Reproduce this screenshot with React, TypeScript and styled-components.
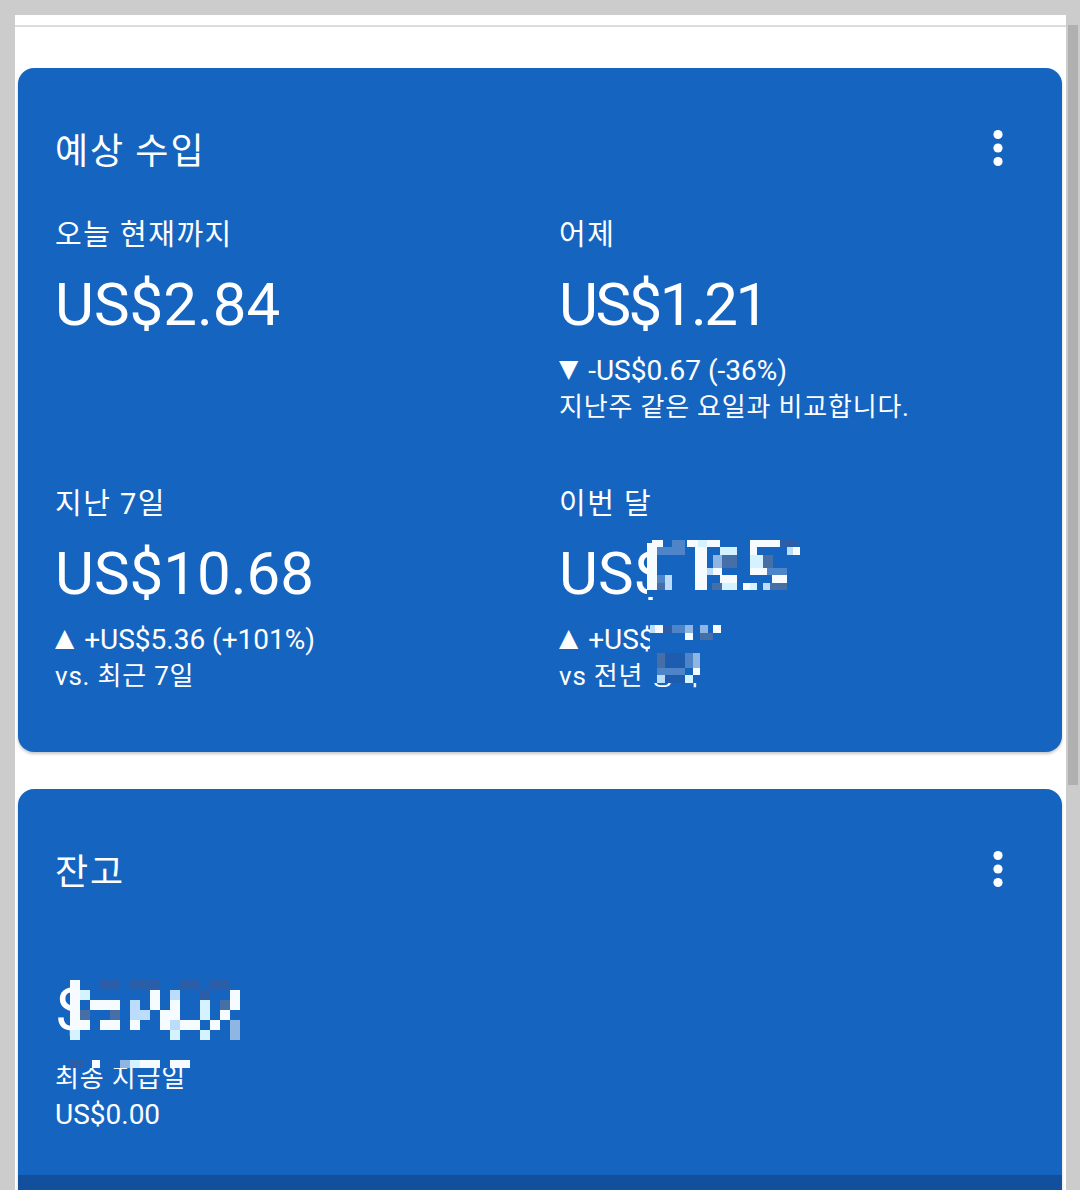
import React from "react";
import styled, { createGlobalStyle } from "styled-components";

const GlobalStyle = createGlobalStyle`
  html, body { margin: 0; padding: 0; background: #cccccc; }
  body {
    font-family: Roboto, "Noto Sans CJK KR", sans-serif;
    -webkit-font-smoothing: antialiased;
  }
  * { box-sizing: border-box; }
`;

const CARD_BLUE = "#1565c0";

const Viewport = styled.div`
  height: 1190px;
  overflow: hidden;
  background: #cccccc;
  padding-top: 15px;
  display: flex;
  align-items: flex-start;
`;

const Gutter = styled.div`
  width: 15px;
  flex: none;
`;

const Screen = styled.main`
  width: 1051px;
  flex: none;
  min-height: 1175px;
  background: #ffffff;
  display: flex;
  flex-direction: column;
`;

const StatusGap = styled.div`
  height: 10px;
`;

const Divider = styled.div`
  height: 2px;
  background: #dcdcdc;
`;

const Feed = styled.div`
  padding: 41px 4px 0 3px;
  display: flex;
  flex-direction: column;
  gap: 37px;
`;

const ScrollTrack = styled.div`
  width: 14px;
  flex: none;
  padding: 10px 2px 0 2px;
`;

const ScrollThumb = styled.div`
  height: 760px;
  background: #b0b0b0;
`;

const Card = styled.section`
  background: ${CARD_BLUE};
  border-radius: 16px;
  box-shadow: 0 2px 3px rgba(0, 0, 0, 0.22);
  color: #ffffff;
  overflow: hidden;
`;

const CardBody = styled.div<{ $bottom: number }>`
  padding: 48px 37px ${(p) => p.$bottom}px 37px;
`;

const CardFooter = styled.div`
  height: 60px;
  background: #12509d;
`;

const CardHeader = styled.header`
  height: 64px;
  display: flex;
  align-items: center;
  justify-content: space-between;
`;

const CardTitle = styled.h2`
  margin: 0;
  font-family: "Noto Sans CJK KR", sans-serif;
  font-size: 36px;
  letter-spacing: 2px;
  font-weight: 400;
  line-height: 64px;
`;

const MenuButton = styled.button`
  width: 54px;
  height: 54px;
  padding: 0;
  border: 0;
  background: transparent;
  display: flex;
  align-items: center;
  justify-content: center;
  color: #ffffff;
`;

const MetricGrid = styled.div`
  margin-top: 37px;
  display: grid;
  grid-template-columns: 504px 1fr;
  row-gap: 62px;
  align-items: start;
`;

const Metric = styled.div`
  display: flex;
  flex-direction: column;
`;

const MetricLabel = styled.div<{ $small?: boolean }>`
  font-family: Roboto, "Noto Sans CJK KR", sans-serif;
  font-size: ${(p) => (p.$small ? 26 : 29)}px;
  letter-spacing: ${(p) => (p.$small ? 0.8 : 1.5)}px;
  line-height: 36px;
  white-space: nowrap;
`;

const MetricValue = styled.div<{ $gap?: number; $tracking?: number }>`
  position: relative;
  margin-top: ${(p) => p.$gap ?? 16}px;
  font-family: Roboto, sans-serif;
  font-size: 60px;
  letter-spacing: ${(p) => p.$tracking ?? 0}px;
  line-height: 72px;
  white-space: nowrap;
`;

const Delta = styled.div`
  position: relative;
  margin-top: 12px;
  display: flex;
  flex-direction: column;
`;

const DeltaLine = styled.div`
  font-family: Roboto, "Noto Sans CJK KR", sans-serif;
  font-size: 28px;
  line-height: 36px;
  white-space: nowrap;
`;

const Arrow = styled.span`
  position: relative;
  top: -3px;
  font-family: "DejaVu Sans", sans-serif;
  font-size: 25px;
  margin-right: 3px;
`;

const DeltaNote = styled.div`
  font-family: Roboto, "Noto Sans CJK KR", sans-serif;
  font-size: 26px;
  letter-spacing: 0.8px;
  line-height: 34px;
  white-space: nowrap;
`;

const Payout = styled.div`
  position: relative;
  margin-top: 14px;
  display: flex;
  flex-direction: column;
`;

const PayoutAmount = styled.div`
  margin-top: 1px;
  font-family: Roboto, sans-serif;
  font-size: 28px;
  line-height: 36px;
`;

const MosaicSvg = styled.svg<{ $left: number; $top: number }>`
  position: absolute;
  left: ${(p) => p.$left}px;
  top: ${(p) => p.$top}px;
  pointer-events: none;
`;

const PALETTE: Record<string, string> = {
  W: "#f5fbff",
  C: "#d4f2ff",
  L: "#bcdcfb",
  P: "#8fb5e3",
  M: "#4e84c8",
  S: "#456fa6",
  D: "#2b5ea8",
  E: "#1d5cae",
};

type Block = [number, number, number, number, string];

function gridBlocks(rows: string[], x0: number, y0: number, cw: number, ch: number): Block[] {
  const out: Block[] = [];
  rows.forEach((row, r) => {
    row.split("").forEach((c, i) => {
      if (c !== ".") out.push([x0 + i * cw, y0 + r * ch, cw, ch, c]);
    });
  });
  return out;
}

const Mosaic = ({
  left,
  top,
  width,
  height,
  base,
  blocks,
}: {
  left: number;
  top: number;
  width: number;
  height: number;
  base: [number, number, number, number];
  blocks: Block[];
}) => (
  <MosaicSvg $left={left} $top={top} width={width} height={height} viewBox={`0 0 ${width} ${height}`}>
    <rect x={base[0]} y={base[1]} width={base[2]} height={base[3]} fill={CARD_BLUE} />
    {blocks.map(([x, y, w, h, c], i) => (
      <rect key={i} x={x} y={y} width={w} height={h} fill={PALETTE[c]} />
    ))}
  </MosaicSvg>
);

const MONTH_VALUE: Block[] = [
  [7, 8, 10, 47, "W"],
  [12, 5, 11, 7, "W"],
  [17, 12, 15, 8, "M"],
  [32, 5, 13, 15, "M"],
  [47, 5, 11, 7, "W"],
  [58, 5, 9, 7, "C"],
  [67, 5, 13, 7, "W"],
  [55, 12, 12, 43, "W"],
  [80, 12, 17, 8, "C"],
  [73, 20, 9, 13, "P"],
  [82, 20, 15, 13, "S"],
  [67, 33, 6, 7, "L"],
  [73, 33, 9, 7, "W"],
  [80, 40, 17, 8, "W"],
  [72, 48, 10, 7, "S"],
  [82, 48, 15, 7, "C"],
  [103, 48, 7, 7, "W"],
  [110, 48, 7, 7, "C"],
  [110, 5, 30, 7, "W"],
  [110, 12, 7, 8, "W"],
  [110, 20, 13, 13, "C"],
  [123, 20, 10, 13, "S"],
  [110, 33, 17, 7, "W"],
  [127, 33, 20, 7, "M"],
  [132, 40, 15, 8, "W"],
  [130, 48, 17, 7, "S"],
  [123, 48, 7, 7, "L"],
  [140, 5, 17, 7, "D"],
  [147, 12, 6, 8, "L"],
  [153, 12, 7, 8, "W"],
  [17, 40, 8, 8, "M"],
  [25, 40, 7, 15, "L"],
  [17, 48, 8, 7, "S"],
];

const MONTH_DELTA: Block[] = [
  [10, 5, 5, 8, "L"],
  [15, 5, 8, 8, "W"],
  [23, 5, 9, 8, "D"],
  [32, 5, 13, 8, "M"],
  [45, 5, 8, 8, "P"],
  [60, 5, 8, 8, "P"],
  [73, 5, 8, 8, "W"],
  [45, 13, 8, 7, "W"],
  [60, 13, 13, 7, "S"],
  [17, 33, 8, 15, "S"],
  [25, 33, 20, 15, "E"],
  [45, 33, 8, 15, "M"],
  [53, 33, 7, 15, "P"],
  [17, 48, 28, 7, "M"],
  [53, 48, 7, 7, "W"],
  [17, 55, 8, 8, "L"],
  [25, 55, 20, 8, "E"],
  [45, 55, 8, 8, "C"],
];

const BALANCE_VALUE: Block[] = gridBlocks(
  [
    "W..DD.DDD..DD.DD..",
    "WC......W.L..D..W.",
    "W.WWW.L.W.W..C.SW.",
    "WS..S.LL.WW..C.W..",
    "WW.WW.W..WLWW.W.P.",
    "C.........C..C..P.",
  ],
  20,
  5,
  10,
  10
);

const PAYOUT_HINT: Block[] = [
  [2, 1, 13, 8, "D"],
  [24, 1, 8, 8, "W"],
  [52, 1, 10, 8, "P"],
  [62, 1, 10, 8, "C"],
  [72, 1, 20, 8, "W"],
  [102, 1, 20, 8, "W"],
];

const KebabIcon = () => (
  <svg width="54" height="54" viewBox="0 0 54 54" aria-hidden="true">
    <circle cx="27" cy="13.5" r="4.6" fill="currentColor" />
    <circle cx="27" cy="27" r="4.6" fill="currentColor" />
    <circle cx="27" cy="40.5" r="4.6" fill="currentColor" />
  </svg>
);

export default function App() {
  return (
    <>
      <GlobalStyle />
      <Viewport>
        <Gutter />
        <Screen>
          <StatusGap />
          <Divider />
          <Feed>
            <Card>
              <CardBody $bottom={59}>
                <CardHeader>
                  <CardTitle>예상 수입</CardTitle>
                  <MenuButton aria-label="더보기">
                    <KebabIcon />
                  </MenuButton>
                </CardHeader>
                <MetricGrid>
                  <Metric>
                    <MetricLabel>오늘 현재까지</MetricLabel>
                    <MetricValue>US$2.84</MetricValue>
                  </Metric>
                  <Metric>
                    <MetricLabel>어제</MetricLabel>
                    <MetricValue $tracking={-2.5}>US$1.21</MetricValue>
                    <Delta>
                      <DeltaLine>
                        <Arrow>▼</Arrow> -US$0.67 (-36%)
                      </DeltaLine>
                      <DeltaNote>지난주 같은 요일과 비교합니다.</DeltaNote>
                    </Delta>
                  </Metric>
                  <Metric>
                    <MetricLabel>지난 7일</MetricLabel>
                    <MetricValue>US$10.68</MetricValue>
                    <Delta>
                      <DeltaLine>
                        <Arrow>▲</Arrow> +US$5.36 (+101%)
                      </DeltaLine>
                      <DeltaNote>vs. 최근 7일</DeltaNote>
                    </Delta>
                  </Metric>
                  <Metric>
                    <MetricLabel>이번 달</MetricLabel>
                    <MetricValue>
                      US$
                      <Mosaic left={81} top={-3} width={170} height={65} base={[7, 3, 158, 59]} blocks={MONTH_VALUE} />
                    </MetricValue>
                    <Delta>
                      <DeltaLine>
                        <Arrow>▲</Arrow> +US$
                      </DeltaLine>
                      <DeltaNote>vs 전년 동기</DeltaNote>
                      <Mosaic left={81} top={-2} width={95} height={66} base={[10, 2, 80, 61]} blocks={MONTH_DELTA} />
                    </Delta>
                  </Metric>
                </MetricGrid>
              </CardBody>
            </Card>
            <Card>
              <CardBody $bottom={42}>
                <CardHeader>
                  <CardTitle>잔고</CardTitle>
                  <MenuButton aria-label="더보기">
                    <KebabIcon />
                  </MenuButton>
                </CardHeader>
                <MetricValue $gap={73}>
                  $
                  <Mosaic left={-5} top={1} width={205} height={66} base={[20, 2, 182, 64]} blocks={BALANCE_VALUE} />
                </MetricValue>
                <Payout>
                  <MetricLabel $small>최종 지급일</MetricLabel>
                  <PayoutAmount>US$0.00</PayoutAmount>
                  <Mosaic left={13} top={-1} width={125} height={10} base={[0, 0, 125, 9]} blocks={PAYOUT_HINT} />
                </Payout>
              </CardBody>
              <CardFooter />
            </Card>
          </Feed>
        </Screen>
        <ScrollTrack>
          <ScrollThumb />
        </ScrollTrack>
      </Viewport>
    </>
  );
}
